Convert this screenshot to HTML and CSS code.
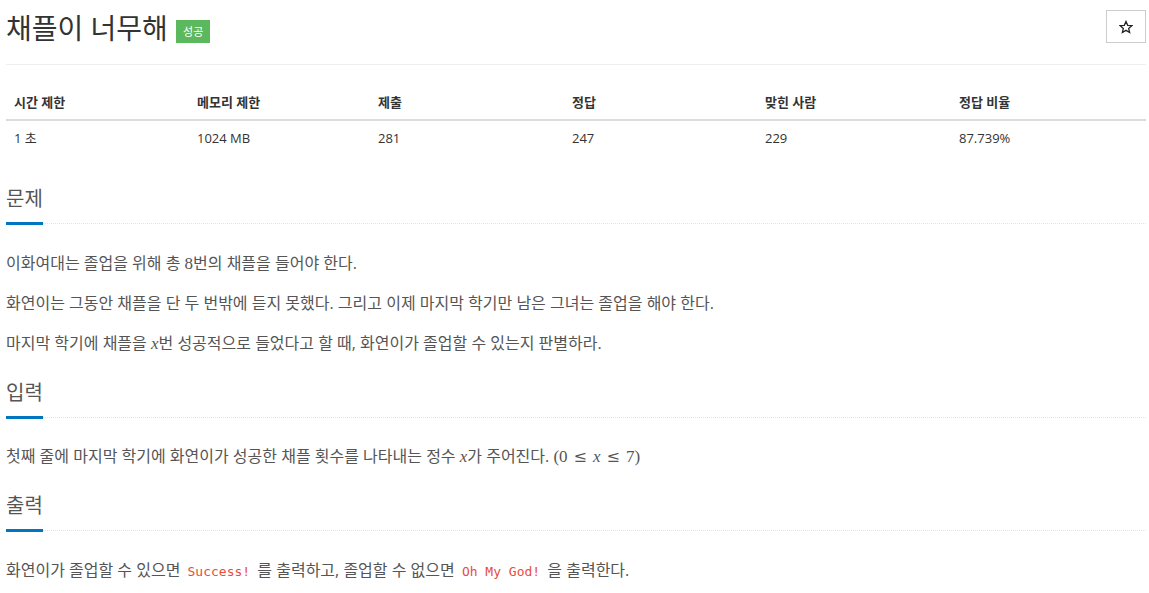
FILE: index.html
```html
<!DOCTYPE html>
<html lang="ko">

<head>
    <meta charset="UTF-8">
    <meta name="viewport" content="width=device-width, initial-scale=1.0">
    <title>채플이 너무해</title>
    <link rel="stylesheet" href="styles.css">
</head>

<body>
    <div class="page">
        <div class="page-header">
            <h1 class="problem-title">
                채플이 너무해
                <span class="label-success">성공</span>
            </h1>
            <button class="star-button" title="즐겨찾기">
                <svg width="14" height="14" viewBox="0 0 24 24">
                    <path d="M12 2.5l2.9 6.6 7.1.6-5.4 4.7 1.6 7-6.2-3.7-6.2 3.7 1.6-7L2 9.7l7.1-.6z"
                        fill="none" stroke="#222" stroke-width="2.2" stroke-linejoin="miter"/>
                </svg>
            </button>
        </div>

        <table class="problem-info">
            <thead>
                <tr>
                    <th class="col-time">시간 제한</th>
                    <th class="col-memory">메모리 제한</th>
                    <th class="col-submit">제출</th>
                    <th class="col-accept">정답</th>
                    <th class="col-user">맞힌 사람</th>
                    <th>정답 비율</th>
                </tr>
            </thead>
            <tbody>
                <tr>
                    <td>1 초</td>
                    <td>1024 MB</td>
                    <td>281</td>
                    <td>247</td>
                    <td>229</td>
                    <td>87.739%</td>
                </tr>
            </tbody>
        </table>

        <section class="problem-section">
            <div class="headline">
                <h2><span>문제</span></h2>
            </div>
            <div class="problem-text">
                <p>이화여대는 졸업을 위해 총 <span class="math">8</span>번의 채플을 들어야 한다.</p>
                <p>화연이는 그동안 채플을 단 두 번밖에 듣지 못했다. 그리고 이제 마지막 학기만 남은 그녀는 졸업을 해야 한다.</p>
                <p>마지막 학기에 채플을 <span class="math math-var">x</span>번 성공적으로 들었다고 할 때, 화연이가 졸업할 수 있는지 판별하라.</p>
            </div>
        </section>

        <section class="problem-section">
            <div class="headline">
                <h2><span>입력</span></h2>
            </div>
            <div class="problem-text">
                <p>첫째 줄에 마지막 학기에 화연이가 성공한 채플 횟수를 나타내는 정수 <span class="math math-var">x</span>가 주어진다. <span class="math">(0<span class="math-rel">≤</span><span class="math-var">x</span><span class="math-rel">≤</span>7)</span></p>
            </div>
        </section>

        <section class="problem-section">
            <div class="headline">
                <h2><span>출력</span></h2>
            </div>
            <div class="problem-text">
                <p>화연이가 졸업할 수 있으면 <code>Success!</code> 를 출력하고, 졸업할 수 없으면 <code>Oh My God!</code> 을 출력한다.</p>
            </div>
        </section>
    </div>
</body>

</html>
```

FILE: styles.css
```css
body {
    margin: 0;
    font-family: 'Open Sans', 'Noto Sans CJK KR', sans-serif;
    font-size: 14px;
    color: #333;
    background-color: #fff;
}

.page {
    padding: 0 3px 0 6px;
}

.page-header {
    display: flex;
    justify-content: space-between;
    align-items: flex-start;
    padding-top: 10px;
    padding-bottom: 18px;
    border-bottom: 1px solid #eee;
}

.problem-title {
    margin: 0;
    font-size: 28px;
    font-weight: 400;
    line-height: 36px;
    color: #333;
}

.label-success {
    display: inline-block;
    vertical-align: 3px;
    margin-left: 1px;
    padding: 4px 7px;
    font-size: 11px;
    font-weight: 400;
    line-height: 15px;
    color: #fff;
    background-color: #5cb85c;
}

.star-button {
    display: flex;
    align-items: center;
    justify-content: center;
    width: 40px;
    height: 33px;
    padding: 0;
    background-color: #fff;
    border: 1px solid #ccc;
    border-radius: 0;
}

.problem-info {
    width: 100%;
    margin-top: 20px;
    border-collapse: collapse;
    table-layout: fixed;
    font-size: 13px;
}

.problem-info th,
.problem-info td {
    text-align: left;
    padding: 8px;
    line-height: 18px;
}

.problem-info th {
    font-weight: 700;
    border-bottom: 2px solid #ddd;
}

/* widths are content widths, 16px of padding on top of each */
.col-time { width: 167px; }
.col-memory { width: 165px; }
.col-submit { width: 178px; }
.col-accept { width: 177px; }
.col-user { width: 178px; }

.problem-section {
    margin-top: 19px;
}

.problem-info + .problem-section {
    margin-top: 27px;
}

.headline {
    border-bottom: 1px dotted #e4e4e4;
}

.headline h2 {
    margin: 0;
    font-size: 20px;
    font-weight: 400;
    line-height: 34px;
    color: #555;
}

.headline h2 span {
    display: inline-block;
    padding-bottom: 6px;
    margin-bottom: -2px;
    border-bottom: 3px solid #0076c0;
}

.problem-text {
    padding-top: 12px;
    font-size: 16px;
    line-height: 26px;
    color: #555;
}

.problem-text p {
    margin: 13.5px 0 0;
}

.math {
    font-family: 'Liberation Serif', 'DejaVu Serif', serif;
    font-size: 17px;
}

.math-var {
    font-style: italic;
}

.math-rel {
    padding: 0 6px;
    font-family: 'DejaVu Serif', serif;
    font-size: 16px;
}

code {
    font-family: 'DejaVu Sans Mono', 'Liberation Mono', monospace;
    font-size: 13px;
    color: #e74c3c;
    padding: 0 3px;
}
```
